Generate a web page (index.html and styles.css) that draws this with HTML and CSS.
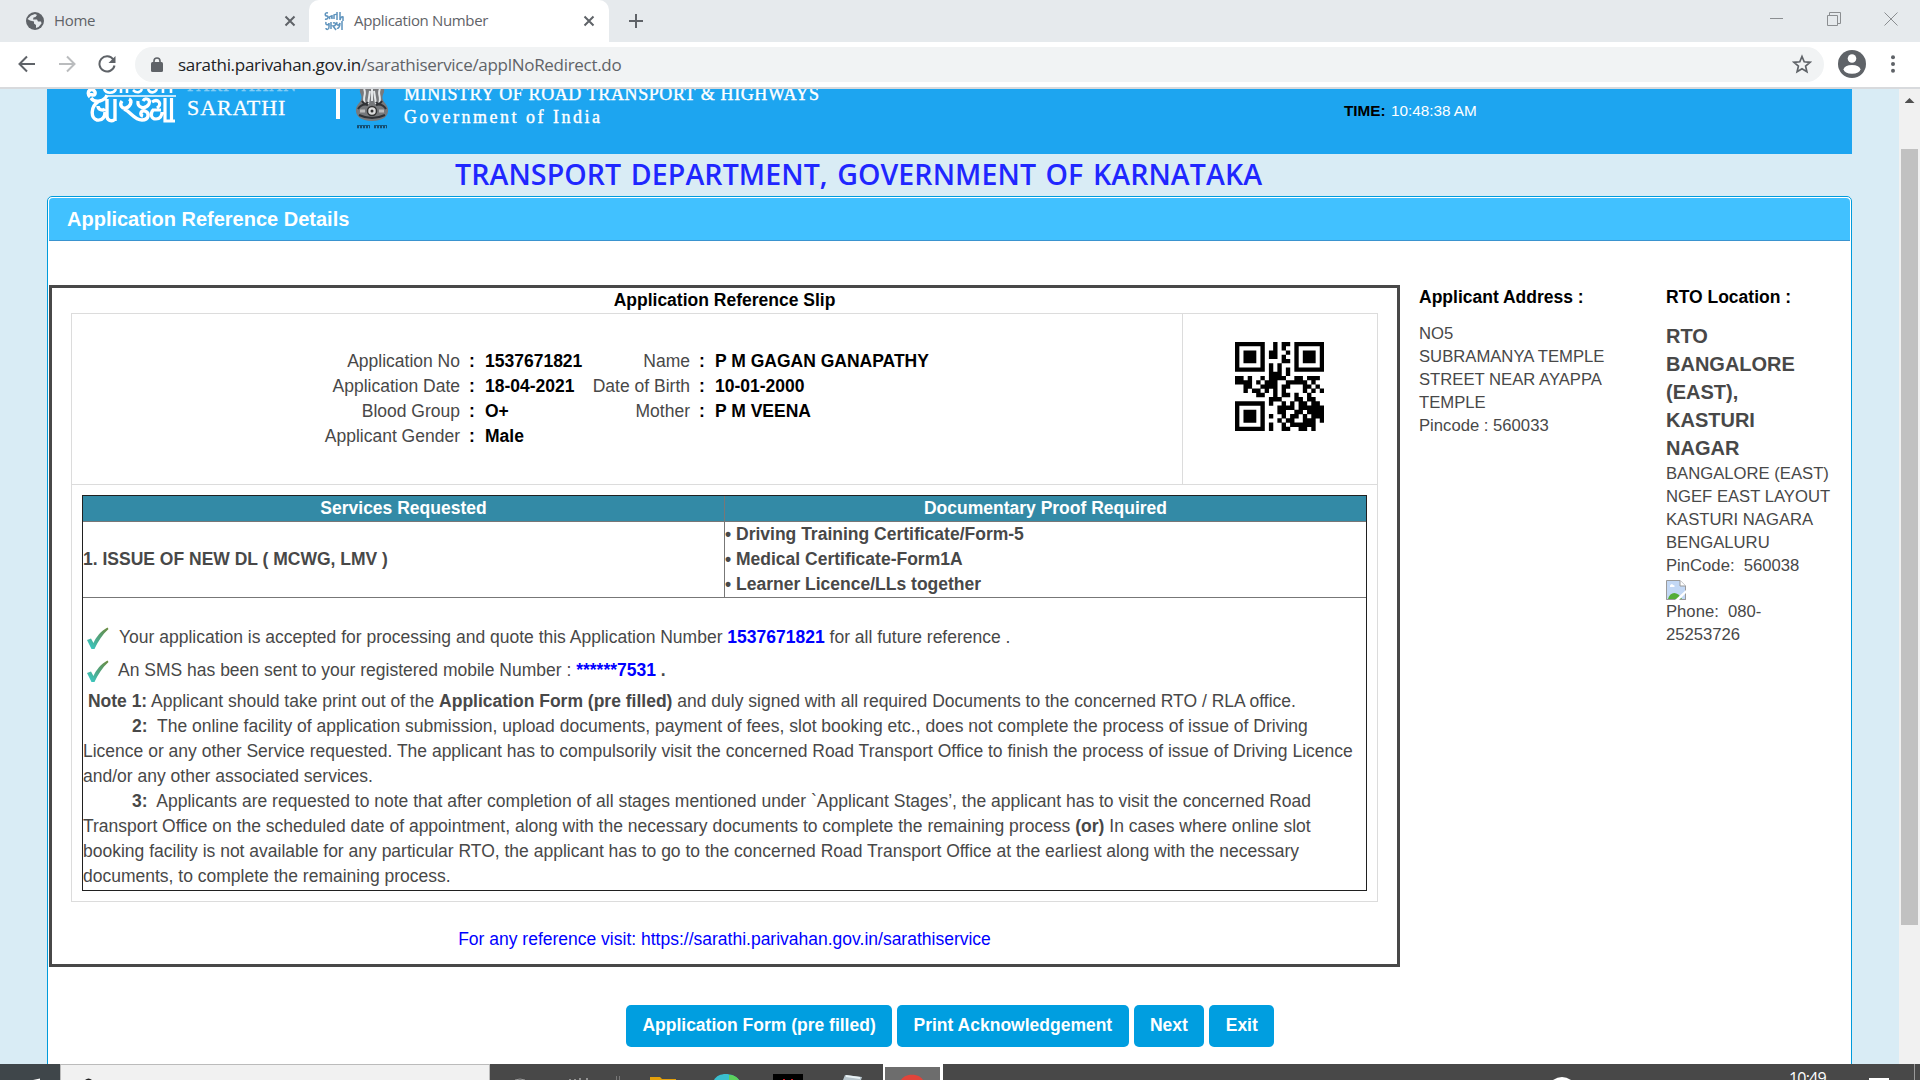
FILE: index.html
```html
<!DOCTYPE html>
<html lang="en">
<head>
<meta charset="utf-8">
<title>Application Number</title>
<link rel="stylesheet" href="styles.css">
</head>
<body>
<div class="screen">
  <header class="tabs">
    <div class="tab">
      <svg class="fav" width="18" height="18" viewBox="0 0 18 18"><circle cx="9" cy="9" r="9" fill="#5f6368"/><path d="M5 3.500l4-1.500 2 1-1.500 2-2 .5-.5 2h4l1 2h3l.5 2-3 3.500-2.500 1 0-3-2-1.500v-2l-4-1-2.500-1.500z" fill="#e6eaed"/></svg>
      <span class="tab-label">Home</span>
      <svg class="x" width="12" height="12" viewBox="0 0 12 12"><path d="M1.500 1.500l9 9M10.500 1.500l-9 9" stroke="#5f6368" stroke-width="2"/></svg>
    </div>
    <div class="tab active">
      <svg class="fav" width="20" height="20" viewBox="0 0 20 20" fill="none" stroke="#5e93bd" stroke-width="1.500"><path d="M4 2C0 1 1 5 3 5s1 4-2 3M6 8c-2-3 2-4 2 0V4M10 8V4q2-1 2 0M13 1v8M16 1v8q1-4 3-3v4M2 11c-1 4 3 3 3 1v4c0 3-3 3-3 1M7 11v7M9 12c4-1 3 3 0 3l3 4M13 11c-1 4 2 4 3 1 0 4-2 6-3 5M18 10v9"/></svg>
      <span class="tab-label">Application Number</span>
      <svg class="x" width="12" height="12" viewBox="0 0 12 12"><path d="M1.500 1.500l9 9M10.500 1.500l-9 9" stroke="#5f6368" stroke-width="2"/></svg>
    </div>
    <svg class="plus" width="16" height="16" viewBox="0 0 16 16"><path d="M8 1v14M1 8h14" stroke="#5f6368" stroke-width="2"/></svg>
    <div class="window-buttons">
      <svg width="14" height="14" viewBox="0 0 14 14"><path d="M0 6.500h13" stroke="#8b8e91"/></svg>
      <svg width="14" height="14" viewBox="0 0 14 14" fill="none" stroke="#8b8e91"><path d="M.5 3.500h10v10H.5zM2.500 3V.5h11v11h-3"/></svg>
      <svg width="14" height="14" viewBox="0 0 14 14"><path d="M.5.5l13 13M13.500.5l-13 13" stroke="#8b8e91"/></svg>
    </div>
  </header>

  <div class="toolbar">
    <svg width="18" height="18" viewBox="0 0 18 18" fill="none" stroke="#5f6368" stroke-width="2"><path d="M17 9H2M9 1.500L1.500 9 9 16.500"/></svg>
    <svg width="18" height="18" viewBox="0 0 18 18" fill="none" stroke="#babcbe" stroke-width="2"><path d="M1 9h15M9 1.500L16.500 9 9 16.500"/></svg>
    <svg width="18" height="18" viewBox="0 0 18 18"><path d="M15.300 4.500A7.600 7.600 0 1 0 16.500 10.500" fill="none" stroke="#5f6368" stroke-width="2"/><path d="M17.500 1v7h-7z" fill="#5f6368"/></svg>
    <div class="omnibox">
      <svg width="12" height="15" viewBox="0 0 12 15"><rect y="5" width="12" height="10" rx="1.500" fill="#5f6368"/><path d="M3 6V4a3 3 0 0 1 6 0v2" fill="none" stroke="#5f6368" stroke-width="1.600"/></svg>
      <span class="url"><b>sarathi.parivahan.gov.in</b>/sarathiservice/applNoRedirect.do</span>
      <svg class="star" width="20" height="20" viewBox="0 0 20 20"><path d="M10 2.500l2.200 5.300 5.800.5-4.400 3.800 1.300 5.600-4.900-3-4.900 3 1.300-5.600L2 8.300l5.800-.5z" fill="none" stroke="#5f6368" stroke-width="1.700"/></svg>
    </div>
    <svg class="avatar" width="28" height="28" viewBox="0 0 28 28"><circle cx="14" cy="14" r="14" fill="#5f6368"/><circle cx="14" cy="8.500" r="4.300" fill="#fff"/><ellipse cx="14" cy="19.300" rx="8.400" ry="4.400" fill="#fff"/></svg>
    <svg class="dots" width="4" height="18" viewBox="0 0 4 18" fill="#5f6368"><circle cx="2" cy="2.300" r="2"/><circle cx="2" cy="9" r="2"/><circle cx="2" cy="15.700" r="2"/></svg>
  </div>

  <div class="viewport">
    <main class="page">
      <div class="banner">
        <svg class="logo" width="91" height="36" viewBox="0 0 91 36" fill="none" stroke="#fff" stroke-width="3.400"><path d="M18 0c2 5 10 5 12 0M35 0v4M41 0v4M47 1c4 4 8 2 9-1M62 0c2 5 7 4 9 0M77 0v4M85 0v4" stroke-width="2.600"/><path d="M22 7h68" stroke-width="1.600"/><path d="M4 8C-1 3 6-3 9 3c1 4-4 4-4 1M5 9c4 6 14 3 16-3M12 13c-7 4-8 16-1 18 6 1 8-4 8-8M12 17c0 4 5 5 7 3M21 10v17c0 4 4 6 7 4M29 10v22"/><path d="M36 12c-3 4 0 8 4 7s7-7 3-9M38 20c7 3 10 11 18 11 7 0 8-7 3-9-4-1-6 4-2 5"/><path d="M52 12c-1 7 7 9 11 3 2-5-4-7-6-3M66 13c6-4 11 2 5 6M67 21c-3 4-2 9 3 9 4 0 6-3 6-7M66 21h9M79 9v23h10M85.500 9v23" stroke-width="3.200"/></svg>
        <div class="brand"><span class="parivahan">PARIVAHAN</span><span>SARATHI</span></div>
        <i class="rule"></i>
        <svg class="emblem" width="36" height="40" viewBox="0 0 36 40"><path d="M6 0h24c1 5-3 6-1 11 1 3 4 4 5 9 1 7-5 12-16 12S1 27 2 20c1-5 4-6 5-9C9 6 5 5 6 0z" fill="#77797c"/><path d="M10 0c3 5-2 8 1 15M16 2l-2 13M20 2l2 13M26 0c-3 5 2 8-1 15M18 0v12" stroke="#e3e6e8" stroke-width="2" fill="none"/><path d="M8 12q3 5 6 1M28 12q-3 5-6 1M4 20q4-6 10-4M32 20q-4-6-10-4M5 26q13 6 26 0" stroke="#303236" stroke-width="2" fill="none"/><circle cx="18" cy="22" r="4.500" fill="#ddd" stroke="#333" stroke-width="1.500"/><circle cx="18" cy="22" r="1.500" fill="#333"/><path d="M6 22h5M25 22h5" stroke="#bbb" stroke-width="3"/><path d="M3 36.500h13M20 36.500h13" stroke="#145b85" stroke-width="1"/><path d="M3 38h13M20 38h13" stroke="#154d70" stroke-width="2.500" stroke-dasharray="2 1"/></svg>
        <div class="ministry"><span class="line1">MINISTRY OF ROAD TRANSPORT &amp; HIGHWAYS</span><span class="line2">Government of India</span></div>
        <div class="time"><b>TIME:</b> 10:48:38 AM</div>
      </div>
      <h1 class="dept"><span>TRANSPORT DEPARTMENT, GOVERNMENT OF KARNATAKA</span></h1>
      <section class="panel">
        <h2 class="panel-head">Application Reference Details</h2>
        <div class="panel-body">
          <div class="slip">
            <h3>Application Reference Slip</h3>
            <div class="frame">
              <div class="summary">
                <div class="facts">
                  <span class="k">Application No</span><b>:</b><b>1537671821</b><span class="k">Name</span><b>:</b><b>P M GAGAN GANAPATHY</b>
                  <span class="k">Application Date</span><b>:</b><b>18-04-2021</b><span class="k">Date of Birth</span><b>:</b><b>10-01-2000</b>
                  <span class="k">Blood Group</span><b>:</b><b>O+</b><span class="k">Mother</span><b>:</b><b>P M VEENA</b>
                  <span class="k">Applicant Gender</span><b>:</b><b>Male</b>
                </div>
                <div class="qr-cell"><svg class="qr" width="89" height="89" viewBox="0 0 21 21"><path id="qr" fill="#000" d=""/></svg></div>
              </div>
              <div class="detail">
                <div class="services">
                  <div class="th">Services Requested</div><div class="th">Documentary Proof Required</div>
                  <div class="td">1. ISSUE OF NEW DL ( MCWG, LMV )</div>
                  <div class="td docs">• Driving Training Certificate/Form-5<br>• Medical Certificate-Form1A<br>• Learner Licence/LLs together</div>
                </div>
                <div class="notes">
                  <p class="tick"><svg width="24" height="24" viewBox="0 0 24 24"><defs><linearGradient id="g" x1="1" y1="0" x2="0" y2="1"><stop offset="0" stop-color="#6d8a3c"/><stop offset=".5" stop-color="#4fa583"/><stop offset="1" stop-color="#35d0d0"/></linearGradient></defs><path d="M1 13l4-1.500 2.500 4.500C10 10 15 4 21.500.5l1 1.500C16 8 12 14.500 8.500 22H5.500z" fill="url(#g)"/></svg><span>Your application is accepted for processing and quote this Application Number <b class="blue">1537671821</b> for all future reference .</span></p>
                  <p class="tick"><svg width="24" height="24" viewBox="0 0 24 24"><path d="M1 13l4-1.500 2.500 4.500C10 10 15 4 21.500.5l1 1.500C16 8 12 14.500 8.500 22H5.500z" fill="url(#g)"/></svg><span>An SMS has been sent to your registered mobile Number : <b class="blue">******7531</b> <b>.</b></span></p>
                  <p class="text">&nbsp;<b>Note 1:</b> Applicant should take print out of the <b>Application Form (pre filled)</b> and duly signed with all required Documents to the concerned RTO / RLA office.<br><b class="num">2:</b>&nbsp; The online facility of application submission, upload documents, payment of fees, slot booking etc., does not complete the process of issue of Driving<br>Licence or any other Service requested. The applicant has to compulsorily visit the concerned Road Transport Office to finish the process of issue of Driving Licence<br>and/or any other associated services.<br><b class="num">3:</b>&nbsp; Applicants are requested to note that after completion of all stages mentioned under `Applicant Stages’, the applicant has to visit the concerned Road<br>Transport Office on the scheduled date of appointment, along with the necessary documents to complete the remaining process <b>(or)</b> In cases where online slot<br>booking facility is not available for any particular RTO, the applicant has to go to the concerned Road Transport Office at the earliest along with the necessary<br>documents, to complete the remaining process.</p>
                </div>
              </div>
            </div>
            <p class="visit">For any reference visit: https://sarathi.parivahan.gov.in/sarathiservice</p>
          </div>
          <aside class="address">
            <h4>Applicant Address :</h4>
            <p>NO5<br>SUBRAMANYA TEMPLE<br>STREET NEAR AYAPPA<br>TEMPLE<br>Pincode : 560033</p>
          </aside>
          <aside class="address">
            <h4>RTO Location :</h4>
            <p class="office">RTO<br>BANGALORE<br>(EAST),<br>KASTURI<br>NAGAR</p>
            <p>BANGALORE (EAST)<br>NGEF EAST LAYOUT<br>KASTURI NAGARA<br>BENGALURU<br>PinCode:&nbsp; 560038</p>
            <svg class="broken" width="20" height="20" viewBox="0 0 20 20"><path d="M.5.5H14l5.500 5.500v13.500H.5z" fill="#c3d8f5" stroke="#9a9a9a"/><path d="M14 .5V6h5.500" fill="#fff" stroke="#9a9a9a"/><path d="M4 6c0-2 3-2 3-1 2 0 2 2 1 2H4z" fill="#fff"/><path d="M2 19c2-8 10-8 14 0z" fill="#54ad38"/><path d="M9 20L20 10v3l-7 7z" fill="#fff"/><path d="M.5 19.500H9M14 19.500h5.500V14" fill="none" stroke="#9a9a9a"/></svg>
            <p>Phone:&nbsp; 080-<br>25253726</p>
          </aside>
        </div>
        <div class="actions"><button>Application Form (pre filled)</button><button>Print Acknowledgement</button><button>Next</button><button>Exit</button></div>
      </section>
    </main>
    <div class="scrollbar"><i class="up"></i><i class="thumb"></i></div>
  </div>

  <footer class="taskbar">
    <div class="start"><svg width="60" height="16" viewBox="0 0 60 16"><path d="M33 16l7-1.500V16z" fill="#fff"/></svg></div>
    <div class="search"><svg width="40" height="15" viewBox="0 0 40 15"><path d="M24 15q3.500-3 7 0z" fill="#222"/></svg></div>
    <svg width="393" height="16" viewBox="490 0 393 16"><path d="M515 16q5-2 10 0" stroke="#999" fill="none"/><path d="M570 15v1M575 15v1M580 14v2M587 14v2" stroke="#ddd"/><path d="M616.500 12v4M619.500 12v4" stroke="#777"/><path d="M650 13h10l2 2h14v1h-26z" fill="#e4a00a"/><path d="M714 16c4-8 19-8 25 0z" fill="#39bfd0"/><path d="M729 11c5 0 8 2 10 5h-10z" fill="#5cd15c"/><path d="M773 10h30v6h-30z" fill="#000"/><path d="M783 15h2v1h-2zM791 15h2v1h-2z" fill="#d81f26"/><path d="M843 16l2-5 17 2-1 3z" fill="#b8c5cc"/><path d="M846 12l14 2" stroke="#e9f2f5" stroke-width="2"/></svg>
    <div class="running"><svg width="56" height="13" viewBox="0 0 56 13"><path d="M16 13c4-7 18-7 22 0z" fill="#e2443a"/></svg></div>
    <svg class="tray" width="20" height="4" viewBox="0 0 20 4"><path d="M1 4q9-6 18 0z" fill="#fff"/></svg>
    <span class="clock">10:49</span>
    <i class="notice"></i>
    <i class="peek"></i>
  </footer>
</div>
<script src="qr.js"></script>
</body>
</html>
```
FILE: qr.js
```js
// One string per row of modules; '#' is a dark module.
const rows = [
  "#######..#.##.#######",
  "#.....#..#.#..#.....#",
  "#.###.#.##..#.#.###.#",
  "#.###.#.##.#..#.###.#",
  "#.###.#....##.#.###.#",
  "#.....#.#.#...#.....#",
  "#######.#.#.#.#######",
  "........###.#........",
  "##.#..#.####..##.###.",
  "####.#.###..#####.#..",
  "..##..####.##...##.#.",
  "..#.##.#.#.#....#.#.#",
  ".....##..#.##.#..#...",
  "........###...##.##..",
  "#######.#..#.#.##.##.",
  "#.....#...####.######",
  "#.###.#...##..##.####",
  "#.###.#.#..#.##.#.###",
  "#.###.#...#.##..###.#",
  "#.....#.#..#.######..",
  "#######.#..##..##.#.."
];
let d = "";
rows.forEach((row, y) => [...row].forEach((c, x) => {
  if (c === "#") d += `M${x} ${y}h1.03v1.03h-1.03z`;
}));
document.getElementById("qr").setAttribute("d", d);
```
FILE: styles.css
```css
* { box-sizing: border-box; }
body { margin: 0; font-family: "Liberation Sans", Arial, sans-serif; }
h1, h2, h3, h4, p { margin: 0; }
svg, i { display: block; flex: none; }
.screen { width: 1920px; height: 1080px; display: flex; flex-direction: column; overflow: hidden; background: #fff; }

.tabs { height: 42px; flex: none; display: flex; align-items: center; background: #e6eaed; color: #5f6368; }
.tab { width: 309px; height: 42px; padding: 0 13px 0 26px; display: flex; align-items: center; }
.tab.active { width: 300px; padding: 0 14px 0 15px; background: #fff; border-radius: 10px 10px 0 0; }
.tab-label { flex: 1; margin: 0 0 2px 10px; font-family: "Open Sans", sans-serif; font-size: 15px; letter-spacing: -.35px; white-space: nowrap; }
.plus { margin-left: 19px; }
.window-buttons { margin-left: auto; display: flex; gap: 43px; padding: 0 22px 5px 0; }

.toolbar { height: 47px; flex: none; display: flex; align-items: center; padding: 0 25px 1px 18px; background: #fff; border-bottom: 2px solid #d8dadd; }
.toolbar > svg + svg { margin-left: 22px; }
.omnibox { width: 1689px; height: 35px; margin-left: 19px; border-radius: 18px; background: #f1f3f4; display: flex; align-items: center; padding: 0 12px 0 16px; }
.url { flex: 1; margin-left: 15px; font: 17px "Open Sans", sans-serif; letter-spacing: -.3px; color: #5f6368; white-space: nowrap; }
.url b { font-weight: 400; color: #202124; }
.avatar { margin-left: 14px; }
.toolbar > .dots { margin-left: 25px; }

.viewport { height: 975px; flex: none; display: flex; overflow: hidden; background: #d9ecf5; }
.page { width: 1852px; padding-left: 47px; flex: none; }
.scrollbar { width: 21px; margin-left: auto; background: #f1f1f1; padding: 9px 2px 0; }
.up { width: 10px; height: 5px; margin: 0 auto 46px; background: #505050; clip-path: polygon(50% 0, 100% 100%, 0 100%); }
.thumb { height: 776px; background: #c1c1c1; }

.banner { height: 65px; display: flex; align-items: flex-start; background: #1da5f0; color: #fff; overflow: hidden; }
.logo { margin-left: 39px; }
.brand { width: 137px; height: 50px; margin: -11px 0 0 10px; display: flex; flex-direction: column; font: 22px/26px "Liberation Serif", serif; letter-spacing: .9px; -webkit-text-stroke: .3px #fff; }
.parivahan { height: 17px; line-height: 14px; font-size: 18px; opacity: .45; }
.rule { width: 4px; height: 30px; background: #fff; margin-left: 12px; }
.emblem { margin-left: 14px; }
.ministry { width: 430px; margin: -7px 0 0 14px; display: flex; flex-direction: column; font: 18px/24px "Liberation Serif", serif; white-space: nowrap; -webkit-text-stroke: .4px #fff; }
.line1 { letter-spacing: .6px; }
.line2 { letter-spacing: 2.500px; line-height: 22px; }
.time { margin: 12px 0 0 auto; width: 508px; font-size: 15.300px; line-height: 20px; }
.time b { color: #000; margin-right: 1px; }

.dept { height: 42px; width: 1805px; font: 600 28.500px/41px "Open Sans", sans-serif; letter-spacing: .1px; word-spacing: 2px; color: #1f27ff; white-space: nowrap; padding-left: 408px; }

.panel { width: 1805px; height: 900px; background: #fff; border: 1px solid #009bdb; border-radius: 5px; padding: 1px; }
.panel-head { height: 43px; background: #41c1ff; border-bottom: 1px solid #3a94cf; border-radius: 4px 4px 0 0; color: #fff; font-size: 20px; line-height: 42px; padding-left: 18px; }
.panel-body { height: 682px; margin-top: 44px; display: flex; }

.slip { width: 1351px; flex: none; border: 3px solid #484848; padding: 0 19px; font-size: 17.500px; line-height: 25px; color: #484848; }
.slip h3 { height: 25px; font-size: 17.500px; line-height: 25px; text-align: center; color: #000; }
.frame { height: 589px; border: 1px solid #dcdcdc; width: 1307px; }
.summary { height: 171px; display: flex; border-bottom: 1px solid #dcdcdc; }
.facts { width: 1111px; border-right: 1px solid #dcdcdc; padding: 35px 0 0 240px; display: grid; grid-template-columns: 148px 25px 107px 98px 25px 1fr; grid-auto-rows: 25px; align-content: start; white-space: nowrap; }
.facts b { color: #000; }
.facts b:nth-child(3n+2) { padding-left: 9px; }
.k { text-align: right; }
.qr-cell { flex: 1; padding: 28px 0 0 52px; }
.detail { margin: 10px 10px 0; height: 396px; border: 1px solid #202020; }
.services { display: grid; grid-template-columns: 642px 1fr; height: 102px; grid-template-rows: 26px 75px; border-bottom: 1px solid #777; font-weight: 700; }
.th { background: #338aa6; color: #fff; text-align: center; line-height: 25px; border-bottom: 1px solid #777; }
.th:nth-child(odd), .td:nth-child(odd) { border-right: 1px solid #777; }
.td { display: flex; align-items: center; }
.td.docs { display: block; }
.notes { padding-top: 23px; white-space: nowrap; }
.tick { height: 33px; display: flex; line-height: 33px; }
.tick svg { margin: 6px 9px 0 3px; }
.tick + .tick svg { margin-right: 8px; }
.blue { color: #00f; }
.text { margin-top: 2px; }
.num { display: inline-block; margin-left: 49px; }
.visit { margin-top: 25px; text-align: center; color: #00f; }

.address { width: 247px; flex: none; padding: 1px 0 0 19px; color: #484848; font-size: 16.670px; line-height: 23px; white-space: nowrap; }
.address + .address { width: 180px; }
.address h4 { font-size: 17.500px; color: #000; line-height: 23px; margin-bottom: 13px; }
.address .office { font-size: 20px; line-height: 28px; font-weight: 700; }
.broken { margin: 3px 0 0; }

.actions { display: flex; gap: 5px; margin: 38px 0 0 577px; }
.actions button { height: 42px; border: 0; border-radius: 5px; background: #009ee0; color: #fff; font: bold 17.500px/40px "Liberation Sans", sans-serif; padding: 0 16.400px 2px; white-space: nowrap; }

.taskbar { height: 16px; flex: none; background: #484848; display: flex; overflow: hidden; }
.start { width: 60px; background: #3f464a; }
.search { width: 430px; background: #f1f1f1; border: 1px solid #bbb; border-bottom: 0; }
.running { width: 60px; border: 2px solid #fff; border-width: 3px 3px 0 2px; background: #6d6d6d; }
.tray { margin: 12px 0 0 609px; }
.clock { margin: 4px 0 0 217px; width: 80px; font: 16px/20px "Open Sans", sans-serif; letter-spacing: -.8px; color: #fff; }
.notice { width: 20px; height: 2px; margin-top: 14px; background: #fff; }
.peek { width: 1px; height: 16px; margin-left: 25px; background: #999; }
```
